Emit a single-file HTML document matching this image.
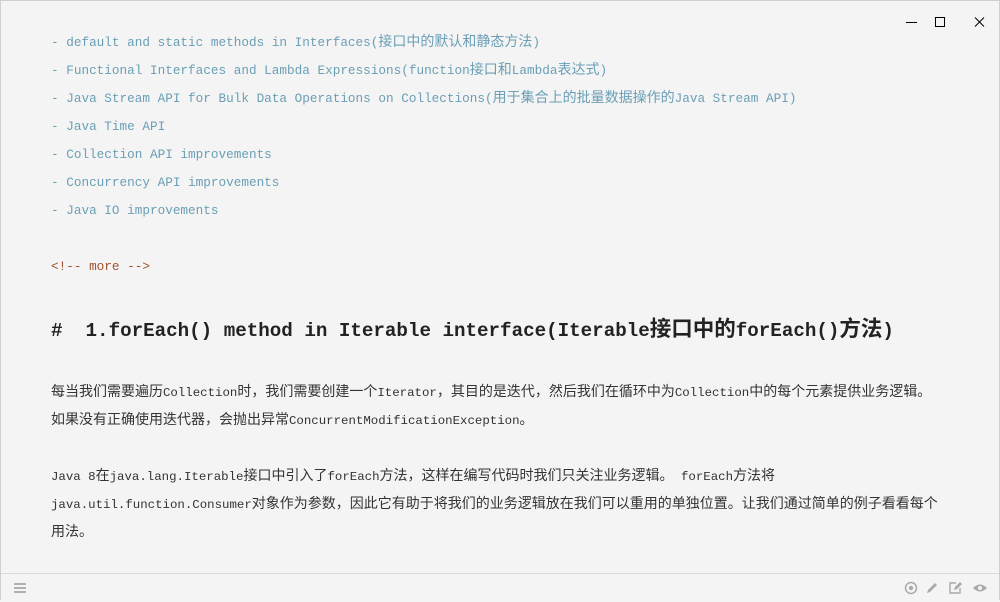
<!DOCTYPE html>
<html><head><meta charset="utf-8"><style>
html,body{margin:0;padding:0}
body{width:1000px;height:600px;background:#f4f4f4;position:relative;overflow:hidden;box-sizing:border-box;border:1px solid #cfcfcf;font-family:"Liberation Mono","Noto Sans CJK SC",monospace}
.l{position:absolute;left:50px;white-space:nowrap;font-size:12.7px;line-height:16px}
.l i{font-style:normal;font-size:14px;line-height:0;font-family:"Noto Sans CJK SC",sans-serif}
.h i{font-size:21.5px}
.b{color:#6a9fb5}
.c{color:#a0522d}
.t{color:#333;font-size:12.4px}
.h{font-weight:bold;font-size:19.2px;color:#222;line-height:24px}
.bar{position:absolute;left:0;right:0;top:572px;height:28px;border-top:1px solid #d8d8d8;background:#f4f4f4}
</style></head><body>
<svg style="position:absolute;left:895px;top:12px" width="100" height="20">
<line x1="10" y1="9.5" x2="21" y2="9.5" stroke="#000"/>
<rect x="39.5" y="4.5" width="9" height="9" fill="none" stroke="#000"/>
<path d="M79 4.5l9 9M88 4.5l-9 9" stroke="#000"/>
</svg>
<div class="l b" style="top:34px">- default and static methods in Interfaces(<i>接口中的默认和静态方法</i>)</div>
<div class="l b" style="top:62px">- Functional Interfaces and Lambda Expressions(function<i>接口和</i>Lambda<i>表达式</i>)</div>
<div class="l b" style="top:90px">- Java Stream API for Bulk Data Operations on Collections(<i>用于集合上的批量数据操作的</i>Java Stream API)</div>
<div class="l b" style="top:118px">- Java Time API</div>
<div class="l b" style="top:146px">- Collection API improvements</div>
<div class="l b" style="top:174px">- Concurrency API improvements</div>
<div class="l b" style="top:202px">- Java IO improvements</div>
<div class="l c" style="top:258px">&lt;!-- more --&gt;</div>
<div class="l h" style="top:318px">#&nbsp; 1.forEach() method in Iterable interface(Iterable<i>接口中的</i>forEach()<i>方法</i>)</div>
<div class="l t" style="top:384px"><i>每当我们需要遍历</i>Collection<i>时，我们需要创建一个</i>Iterator<i>，其目的是迭代，然后我们在循环中为</i>Collection<i>中的每个元素提供业务逻辑。</i></div>
<div class="l t" style="top:412px"><i>如果没有正确使用迭代器，会抛出异常</i>ConcurrentModificationException<i>。</i></div>
<div class="l t" style="top:468px">Java 8<i>在</i>java.lang.Iterable<i>接口中引入了</i>forEach<i>方法，这样在编写代码时我们只关注业务逻辑。</i> forEach<i>方法将</i></div>
<div class="l t" style="top:496px">java.util.function.Consumer<i>对象作为参数，因此它有助于将我们的业务逻辑放在我们可以重用的单独位置。让我们通过简单的例子看看每个</i></div>
<div class="l t" style="top:524px"><i>用法。</i></div>
<div class="bar">
<svg style="position:absolute;left:12px;top:8px" width="14" height="12"><path d="M1 2h12M1 6h12M1 10h12" stroke="#999" stroke-width="1.5"/></svg>
<svg style="position:absolute;left:900px;top:6px" width="90" height="16">
<circle cx="10" cy="8" r="5.5" fill="none" stroke="#aaa" stroke-width="1.5"/><circle cx="10" cy="8" r="2.2" fill="#aaa"/>
<path d="M26 13l1-3 7-7 2 2-7 7z" fill="#aaa"/>
<path d="M55 3h-6v10h10v-5" fill="none" stroke="#aaa" stroke-width="1.4"/><path d="M53 10l1-3 5-5 2 2-5 5z" fill="#aaa"/>
<path d="M72 8q7-7 14 0q-7 7-14 0z" fill="#aaa"/><circle cx="79" cy="8" r="2" fill="#f4f4f4"/>
</svg>
</div>
</body></html>
